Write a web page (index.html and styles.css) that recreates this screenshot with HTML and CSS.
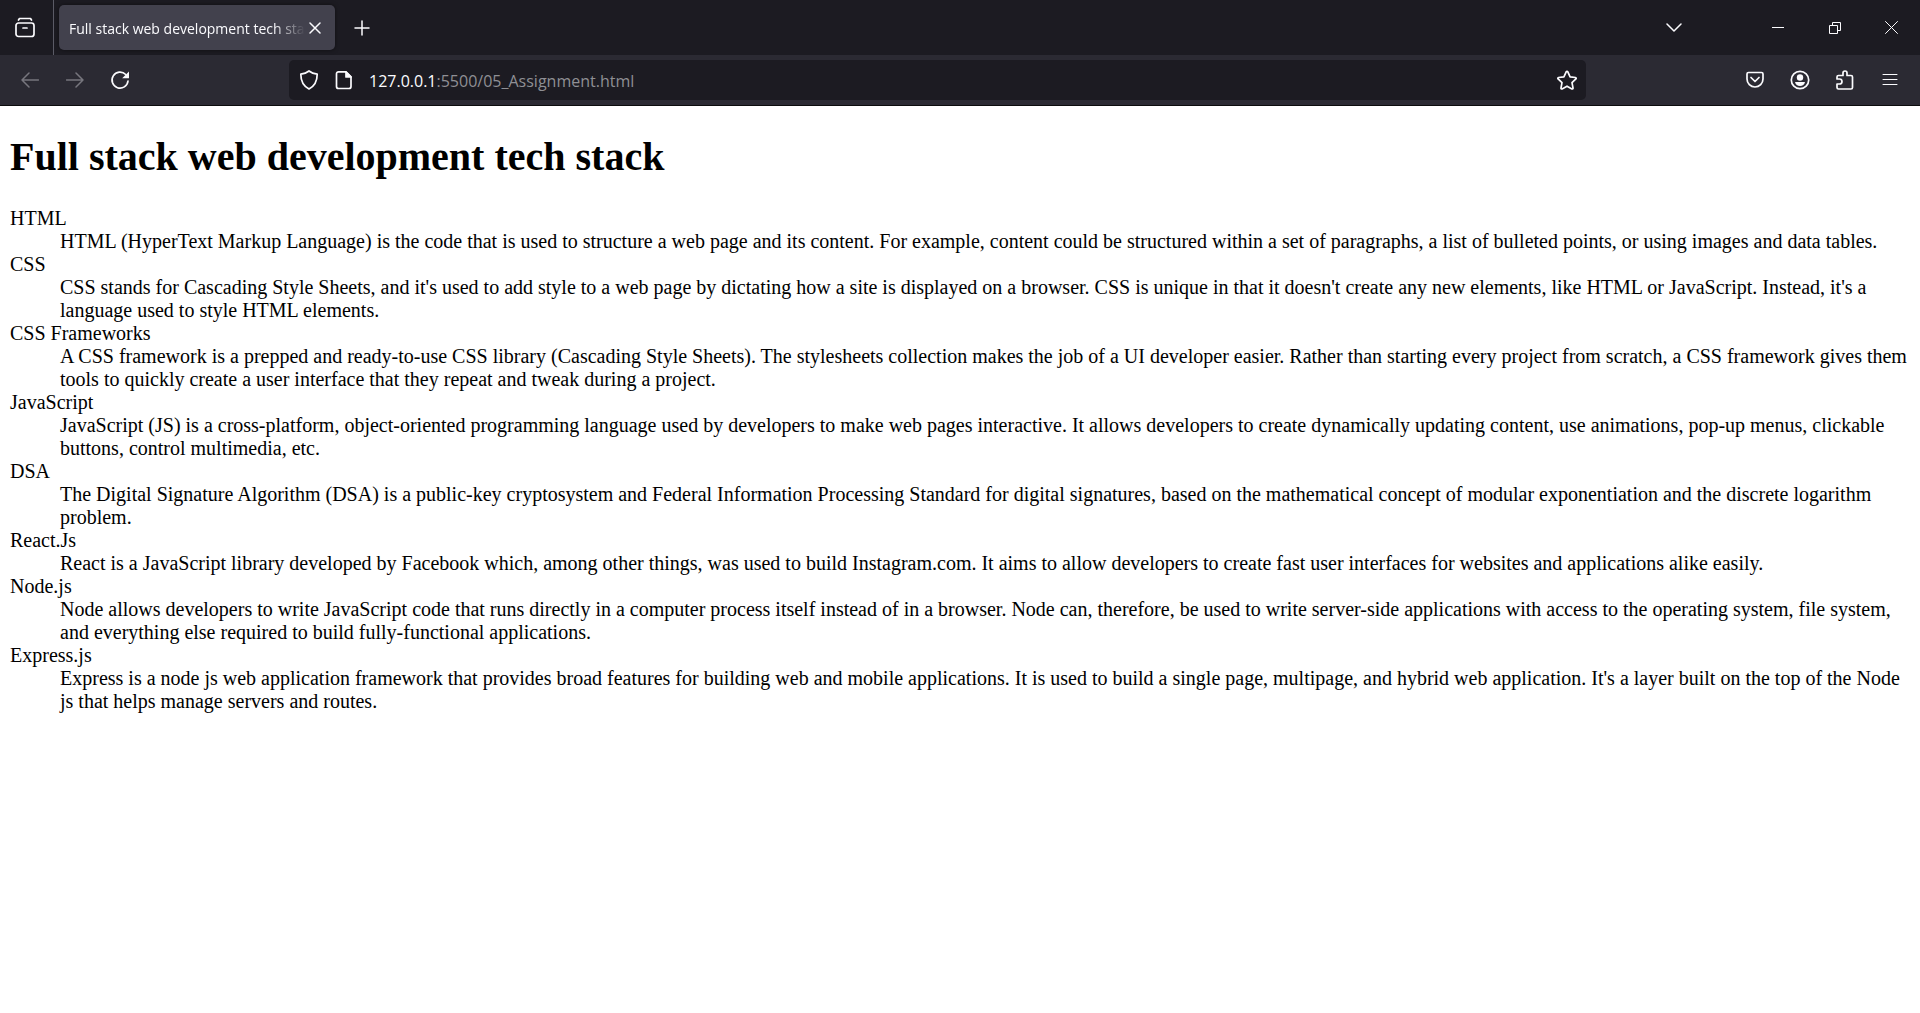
FILE: index.html
```html
<!DOCTYPE html>
<html lang="en">
<head>
<meta charset="utf-8">
<title>Full stack web development tech stack</title>
<link rel="stylesheet" href="styles.css">
</head>
<body>
<header class="browser">
  <div class="tab-strip">
    <button class="view-button" aria-label="Firefox View">
      <svg class="icon bold" width="22" height="22" viewBox="0 0 22 22"><path d="M4.500 3 5.500 1.500h11L17.500 3"/><rect x="2" y="6" width="18" height="13.500" rx="2.500"/><path d="M9 11h4"/></svg>
    </button>
    <div class="tab">
      <span class="tab-title">Full stack web development tech stack</span>
      <button class="tab-close" aria-label="Close tab">
        <svg class="icon" width="12" height="12" viewBox="0 0 12 12"><path d="m1 1 10 10M11 1 1 11"/></svg>
      </button>
    </div>
    <button class="tool new-tab" aria-label="New tab">
      <svg class="icon" width="16" height="16" viewBox="0 0 16 16"><path d="M8 1v14M1 8h14"/></svg>
    </button>
    <button class="tool all-tabs" aria-label="List all tabs">
      <svg class="icon" width="16" height="16" viewBox="0 0 16 16"><path d="m1 4 7 7 7-7"/></svg>
    </button>
    <div class="window-controls">
      <button class="window-button" aria-label="Minimize"><svg class="icon sharp" width="12" height="12" viewBox="0 0 12 12"><path d="M0 5.500h12"/></svg></button>
      <button class="window-button" aria-label="Restore"><svg class="icon sharp" width="12" height="12" viewBox="0 0 12 12"><path d="M.5 3.500h8v8h-8zM3.500 3.500v-3h8v8h-3"/></svg></button>
      <button class="window-button" aria-label="Close"><svg class="icon thin" width="13" height="13" viewBox="0 0 13 13"><path d="m.5.5 12 12M12.500.5l-12 12"/></svg></button>
    </div>
  </div>
  <div class="toolbar">
    <button class="tool dim" aria-label="Back"><svg class="icon" width="18" height="16" viewBox="0 0 18 16"><path d="M17.500 8H1M8 1 1 8l7 7"/></svg></button>
    <button class="tool dim" aria-label="Forward"><svg class="icon" width="18" height="16" viewBox="0 0 18 16"><path d="M.5 8H17M10 1l7 7-7 7"/></svg></button>
    <button class="tool" aria-label="Reload"><svg class="icon bold" width="20" height="20" viewBox="0 0 20 20"><path d="M18 11a8 8 0 1 1-2.300-6.500"/><path class="solid" d="M19 1.500v6.200a.6.600 0 0 1-.6.600h-6.200z"/></svg></button>
    <div class="address-bar">
      <svg class="icon bold" width="20" height="20" viewBox="0 0 20 20"><path d="M10 1c2.500 2 5 2.800 8.200 3.200C18.200 11 16.500 15.500 10 19 3.500 15.500 1.800 11 1.800 4.200 5 3.800 7.500 3 10 1z"/></svg>
      <svg class="icon bold" width="20" height="20" viewBox="0 0 20 20"><path d="M4.500 1.800H12l5 5v9.700a2 2 0 0 1-2 2H4.500a2 2 0 0 1-2-2V3.800a2 2 0 0 1 2-2z"/><path class="fill" d="M12 2v5h5z"/></svg>
      <p class="url"><span class="host">127.0.0.1</span>:5500/05_Assignment.html</p>
      <button class="star" aria-label="Bookmark this page"><svg class="icon bold" width="20" height="20" viewBox="0 0 20 20"><path d="M9.300 1.700a.8.800 0 0 1 1.400 0l2.400 5.100 5.400.7a.8.800 0 0 1 .4 1.400L15 12.700l1 5.300a.8.800 0 0 1-1.100.9L10 16.200l-4.900 2.700A.8.800 0 0 1 4 18l1-5.300-3.900-3.800a.8.800 0 0 1 .4-1.400l5.400-.7z"/></svg></button>
    </div>
    <div class="actions">
      <button class="tool" aria-label="Save to Pocket"><svg class="icon bold" width="20" height="20" viewBox="0 0 20 20"><path d="M3.500 2.500h13A1.500 1.500 0 0 1 18 4v5a8 8 0 0 1-16 0V4a1.500 1.500 0 0 1 1.500-1.500z"/><path d="m6 7.500 4 4 4-4"/></svg></button>
      <button class="tool" aria-label="Account"><svg class="icon bold" width="20" height="20" viewBox="0 0 20 20"><circle cx="10" cy="10" r="8.700"/><circle class="solid" cx="10" cy="7.500" r="3.200"/><path class="solid" d="M5 12h10c-.5 2.500-2.500 4-5 4s-4.500-1.500-5-4z"/></svg></button>
      <button class="tool" aria-label="Extensions"><svg class="icon bold" width="20" height="20" viewBox="0 0 20 20"><path d="M2 9V7a1.500 1.500 0 0 1 1.500-1.500H8V3a2 2 0 0 1 4 0v2.500h4A1.500 1.500 0 0 1 17.500 7v10.500A1.500 1.500 0 0 1 16 19H3.500A1.500 1.500 0 0 1 2 17.500V14h2.500a2.500 2.500 0 0 0 0-5z"/></svg></button>
      <button class="tool" aria-label="Menu"><svg class="icon thin" width="16" height="16" viewBox="0 0 16 16"><path d="M1 2.500h14M1 7.500h14M1 12.500h14"/></svg></button>
    </div>
  </div>
</header>
<main class="page">
  <h1>Full stack web development tech stack</h1>
  <dl>
    <dt>HTML</dt>
    <dd>HTML (HyperText Markup Language) is the code that is used to structure a web page and its content. For example, content could be structured within a set of paragraphs, a list of bulleted points, or using images and data tables.</dd>
    <dt>CSS</dt>
    <dd>CSS stands for Cascading Style Sheets, and it's used to add style to a web page by dictating how a site is displayed on a browser. CSS is unique in that it doesn't create any new elements, like HTML or JavaScript. Instead, it's a language used to style HTML elements.</dd>
    <dt>CSS Frameworks</dt>
    <dd>A CSS framework is a prepped and ready-to-use CSS library (Cascading Style Sheets). The stylesheets collection makes the job of a UI developer easier. Rather than starting every project from scratch, a CSS framework gives them tools to quickly create a user interface that they repeat and tweak during a project.</dd>
    <dt>JavaScript</dt>
    <dd>JavaScript (JS) is a cross-platform, object-oriented programming language used by developers to make web pages interactive. It allows developers to create dynamically updating content, use animations, pop-up menus, clickable buttons, control multimedia, etc.</dd>
    <dt>DSA</dt>
    <dd>The Digital Signature Algorithm (DSA) is a public-key cryptosystem and Federal Information Processing Standard for digital signatures, based on the mathematical concept of modular exponentiation and the discrete logarithm problem.</dd>
    <dt>React.Js</dt>
    <dd>React is a JavaScript library developed by Facebook which, among other things, was used to build Instagram.com. It aims to allow developers to create fast user interfaces for websites and applications alike easily.</dd>
    <dt>Node.js</dt>
    <dd>Node allows developers to write JavaScript code that runs directly in a computer process itself instead of in a browser. Node can, therefore, be used to write server-side applications with access to the operating system, file system, and everything else required to build fully-functional applications.</dd>
    <dt>Express.js</dt>
    <dd>Express is a node js web application framework that provides broad features for building web and mobile applications. It is used to build a single page, multipage, and hybrid web application. It's a layer built on the top of the Node js that helps manage servers and routes.</dd>
  </dl>
</main>
</body>
</html>
```
FILE: styles.css
```css
* { box-sizing: border-box; }

body {
  margin: 0;
  background: #fff;
  color: #000;
  font-family: "Liberation Serif", "Times New Roman", serif;
  font-size: 20px;
  line-height: 23px;
}

button {
  display: flex;
  align-items: center;
  justify-content: center;
  padding: 0;
  border: 0;
  background: none;
  color: inherit;
}

.browser {
  background: #2b2a33;
  border-bottom: 1px solid #0c0c0d;
  color: #fbfbfe;
  font-family: "Open Sans", "Noto Sans", sans-serif;
}

.icon {
  flex: none;
  fill: none;
  stroke: currentColor;
  stroke-width: 1.5px;
  stroke-linecap: round;
  stroke-linejoin: round;
}
.icon.bold { stroke-width: 1.7px; }
.icon.thin { stroke-width: 1px; }
.icon.sharp { stroke-width: 1px; stroke-linecap: butt; stroke-linejoin: miter; }
.icon .fill { fill: currentColor; }
.icon .solid { fill: currentColor; stroke: none; }

.tab-strip {
  display: flex;
  align-items: center;
  height: 55px;
  background: #1c1b22;
}

.view-button {
  width: 54px;
  height: 55px;
  padding-right: 4px;
  border-right: 1px solid #5b5b66;
}

.tab {
  display: flex;
  align-items: center;
  width: 276px;
  height: 45px;
  margin-left: 5px;
  padding: 0 10px;
  border-radius: 5px;
  background: #42414d;
  box-shadow: 0 0 4px rgba(0, 0, 0, 0.5);
}

.tab-title {
  flex: 1;
  padding-top: 2px;
  overflow: hidden;
  white-space: nowrap;
  font-size: 14px;
  -webkit-mask-image: linear-gradient(to left, transparent, #000 32px);
  mask-image: linear-gradient(to left, transparent, #000 32px);
}

.tab-close { width: 20px; height: 30px; }

.tool {
  width: 45px;
  height: 40px;
}
.tool.dim { color: #77767e; }

.new-tab { margin-left: 4px; }
.all-tabs { margin-left: auto; margin-right: 53px; }

.window-controls { display: flex; }
.window-button { width: 57px; height: 55px; }

.toolbar {
  display: flex;
  align-items: center;
  height: 50px;
  padding: 0 8px 0 7px;
}

.address-bar {
  display: flex;
  align-items: center;
  gap: 15px;
  flex: 1;
  height: 40px;
  margin: 0 146px 0 147px;
  padding: 0 9px 0 10px;
  border-radius: 5px;
  background: #1c1b22;
}

.url {
  flex: 1;
  margin: 0;
  padding-top: 2px;
  color: #8f8f94;
  font-size: 16px;
}
.url .host { color: #fbfbfe; }

.actions { display: flex; }

.page { padding: 0 10px; }

h1 {
  margin: 28px 0 27px;
  font-size: 40px;
  line-height: 46px;
}

dl { margin: 0; }
dd { margin: 0 0 0 50px; }
```
